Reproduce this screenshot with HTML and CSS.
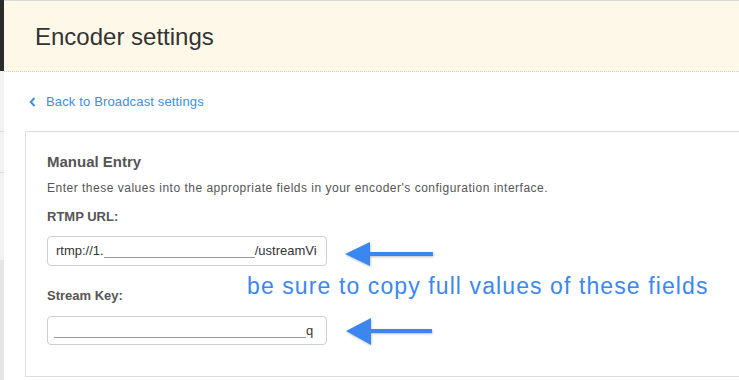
FILE: index.html
```html
<!DOCTYPE html>
<html lang="en">
<head>
<meta charset="utf-8">
<title>Encoder settings</title>
<link rel="stylesheet" href="styles.css">
</head>
<body>
<div class="page">
  <div class="rail">
    <div class="rail-top"></div>
    <div class="rail-seg rail-a"></div>
    <div class="rail-seg rail-b"></div>
    <div class="rail-seg rail-c"></div>
    <div class="rail-bottom"></div>
  </div>
  <div class="main">
    <header class="header">
      <h1 class="title">Encoder settings</h1>
    </header>
    <div class="content">
      <a class="back" href="#">
        <svg class="chev" width="7" height="10" viewBox="0 0 7 10"><polyline points="5.5,1 1.8,5 5.5,9" fill="none" stroke="#3d8ee6" stroke-width="2"/></svg>
        <span>Back to Broadcast settings</span>
      </a>
      <section class="card">
        <h2 class="card-title">Manual Entry</h2>
        <p class="desc">Enter these values into the appropriate fields in your encoder's configuration interface.</p>
        <div class="label">RTMP URL:</div>
        <div class="field field-url"><div class="val">rtmp://1.<span class="redact redact-url"></span>/ustreamVideo/</div></div>
        <div class="label label-key">Stream Key:</div>
        <div class="field field-key"><div class="val"><span class="redact redact-key"></span>q</div></div>
      </section>
    </div>
  </div>

  <div class="note">be sure to copy full values of these fields</div>
  <svg class="arrow arrow-1" width="100" height="32" viewBox="0 0 100 32">
    <defs>
      <filter id="sh" x="-10%" y="-20%" width="130%" height="160%">
        <feDropShadow dx="0.5" dy="1" stdDeviation="0.8" flood-color="#000" flood-opacity="0.25"/>
      </filter>
    </defs>
    <path d="M2 14 L27 2 L27 12 L90 12 L90 16 L27 16 L27 26 Z" fill="#3b86ef" filter="url(#sh)"/>
  </svg>
  <svg class="arrow arrow-2" width="100" height="32" viewBox="0 0 100 32">
    <path d="M2 14 L27 1 L27 12 L88 12 L88 16 L27 16 L27 28 Z" fill="#3b86ef" filter="url(#sh)"/>
  </svg>
</div>
</body>
</html>
```
FILE: styles.css
```css
* { box-sizing: border-box; }
html, body {
  margin: 0;
  padding: 0;
  background: #fff;
}
body {
  width: 739px;
  height: 380px;
  overflow: hidden;
  font-family: "Liberation Sans", Arial, Helvetica, sans-serif;
  color: #333;
}
.page {
  position: relative;
  display: flex;
  width: 739px;
  height: 380px;
  overflow: hidden;
}
.rail {
  width: 4px;
  flex: none;
  display: flex;
  flex-direction: column;
  background: #f2f2f2;
}
.rail-top { height: 71px; background: #2b2b2b; }
.rail-seg { background: #f2f2f2; border-bottom: 1px solid #dcdcdc; }
.rail-a { height: 61px; }
.rail-b { height: 41px; }
.rail-c { height: 87px; border-bottom: 0; }
.rail-bottom { flex: 1; background: #e6e6e6; }

.main {
  flex: 1;
  min-width: 0;
  display: flex;
  flex-direction: column;
}
.header {
  height: 72px;
  background: #fef8e8;
  border-top: 1px solid #d8d8d8;
  border-bottom: 1px dotted #d9cdb3;
  display: flex;
  align-items: center;
  padding-left: 31px;
}
.title {
  margin: 0;
  font-size: 24px;
  font-weight: normal;
  color: #333;
  line-height: 28px;
  position: relative;
  top: 1px;
}
.content {
  padding-left: 21px;
}
.back {
  display: flex;
  align-items: center;
  gap: 10px;
  margin: 21px 0 0 4px;
  height: 18px;
  font-size: 13px;
  letter-spacing: 0.15px;
  line-height: 18px;
  color: #3d8ee6;
  text-decoration: none;
}
.chev { flex: none; }
.card {
  margin-top: 20px;
  margin-right: -2px;
  border: 1px solid #dedede;
  border-right: 0;
  padding: 20px 0 29px 21px;
  height: 246px;
}
.card-title {
  margin: 0 0 7px;
  font-size: 15px;
  line-height: 20px;
  font-weight: bold;
  color: #555;
}
.desc {
  margin: 0;
  font-size: 12px;
  letter-spacing: 0.5px;
  line-height: 18px;
  color: #555;
}
.label {
  margin-top: 11px;
  font-size: 13px;
  line-height: 18px;
  font-weight: bold;
  color: #555;
}
.label-key { margin-top: 21px; }
.field {
  margin-top: 10px;
  width: 280px;
  height: 30px;
  border: 1px solid #cfcfcf;
  border-radius: 4px;
  padding: 0 9px 0 8px;
  font-size: 13px;
  line-height: 28px;
  color: #333;
  background: #fff;
}
.field-key { margin-top: 11px; height: 29px; line-height: 27px; padding-left: 6px; }
.val {
  white-space: nowrap;
  overflow: hidden;
}
.redact {
  display: inline-block;
  height: 1px;
  background: #9a9a9a;
  vertical-align: -3px;
}
.redact-url { width: 151px; }
.redact-key { width: 252px; }

.note {
  position: absolute;
  left: 247px;
  top: 272px;
  font-size: 23px;
  letter-spacing: 1.1px;
  line-height: 28px;
  color: #3b87ef;
  white-space: nowrap;
}
.arrow { position: absolute; }
.arrow-1 { left: 343px; top: 240px; }
.arrow-2 { left: 344px; top: 317px; }
```
